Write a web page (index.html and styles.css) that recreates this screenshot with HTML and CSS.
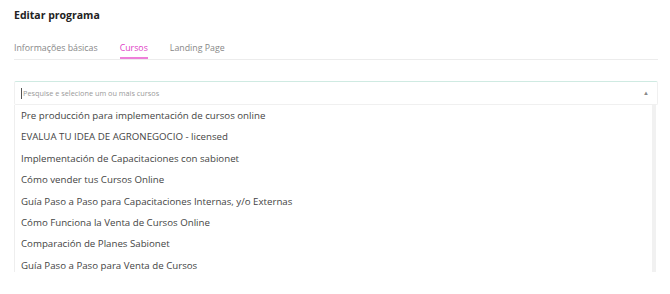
FILE: index.html
```html
<!DOCTYPE html>
<html lang="pt">

<head>
    <meta charset="UTF-8">
    <meta name="viewport" content="width=device-width, initial-scale=1.0">
    <title>Editar programa</title>
    <link rel="stylesheet" href="styles.css">
</head>

<body>

    <h1 class="titulo">Editar programa</h1>

    <div class="abas">
        <span class="aba">Informações básicas</span>
        <span class="aba ativa">Cursos</span>
        <span class="aba">Landing Page</span>
    </div>

    <div class="seletor">
        <div class="campo">
            <span class="cursor"></span>
            <span class="placeholder">Pesquise e selecione um ou mais cursos</span>
            <span class="seta">&#9650;</span>
        </div>
        <ul class="lista">
            <li>Pre producción para implementación de cursos online</li>
            <li>EVALUA TU IDEA DE AGRONEGOCIO - licensed</li>
            <li>Implementación de Capacitaciones con sabionet</li>
            <li>Cómo vender tus Cursos Online</li>
            <li>Guía Paso a Paso para Capacitaciones Internas, y/o Externas</li>
            <li>Cómo Funciona la Venta de Cursos Online</li>
            <li>Comparación de Planes Sabionet</li>
            <li>Guía Paso a Paso para Venta de Cursos</li>
        </ul>
    </div>

</body>

</html>
```

FILE: styles.css
```css
body {
    margin: 0;
    padding: 0 12px 0 14px;
    font-family: "Open Sans", sans-serif;
    background-color: #fff;
    color: #444;
}

.titulo {
    margin: 0;
    padding-top: 7px;
    font-size: 10.5px;
    font-weight: 700;
    color: #222;
    line-height: 16px;
}

.abas {
    display: flex;
    gap: 22px;
    margin-top: 19px;
    border-bottom: 1px solid #ececec;
}

.aba {
    font-size: 8.8px;
    color: #888;
    line-height: 13px;
    padding-bottom: 4px;
}

.aba.ativa {
    color: #e03fc6;
    border-bottom: 2px solid #ee7fd9;
    padding-bottom: 2px;
}

.seletor {
    margin-top: 21px;
}

.campo {
    display: flex;
    align-items: center;
    height: 22px;
    border: 1px solid #f0f0f0;
    border-top-color: #cfeae2;
    border-radius: 2px;
    padding: 0 8px 0 6px;
}

.cursor {
    width: 1px;
    height: 11px;
    background-color: #555;
    margin-right: 1px;
}

.placeholder {
    flex: 1;
    font-size: 7.3px;
    color: #999;
}

.seta {
    font-size: 6px;
    color: #888;
}

.lista {
    list-style: none;
    margin: 0;
    padding: 0;
    height: 167px;
    overflow: hidden;
    border-left: 1px solid #eee;
    border-right: 4px solid #f1f1f1;
    margin-right: 2px;
}

.lista li {
    font-size: 9.7px;
    color: #444;
    line-height: 21.4px;
    padding-left: 6px;
}
```
